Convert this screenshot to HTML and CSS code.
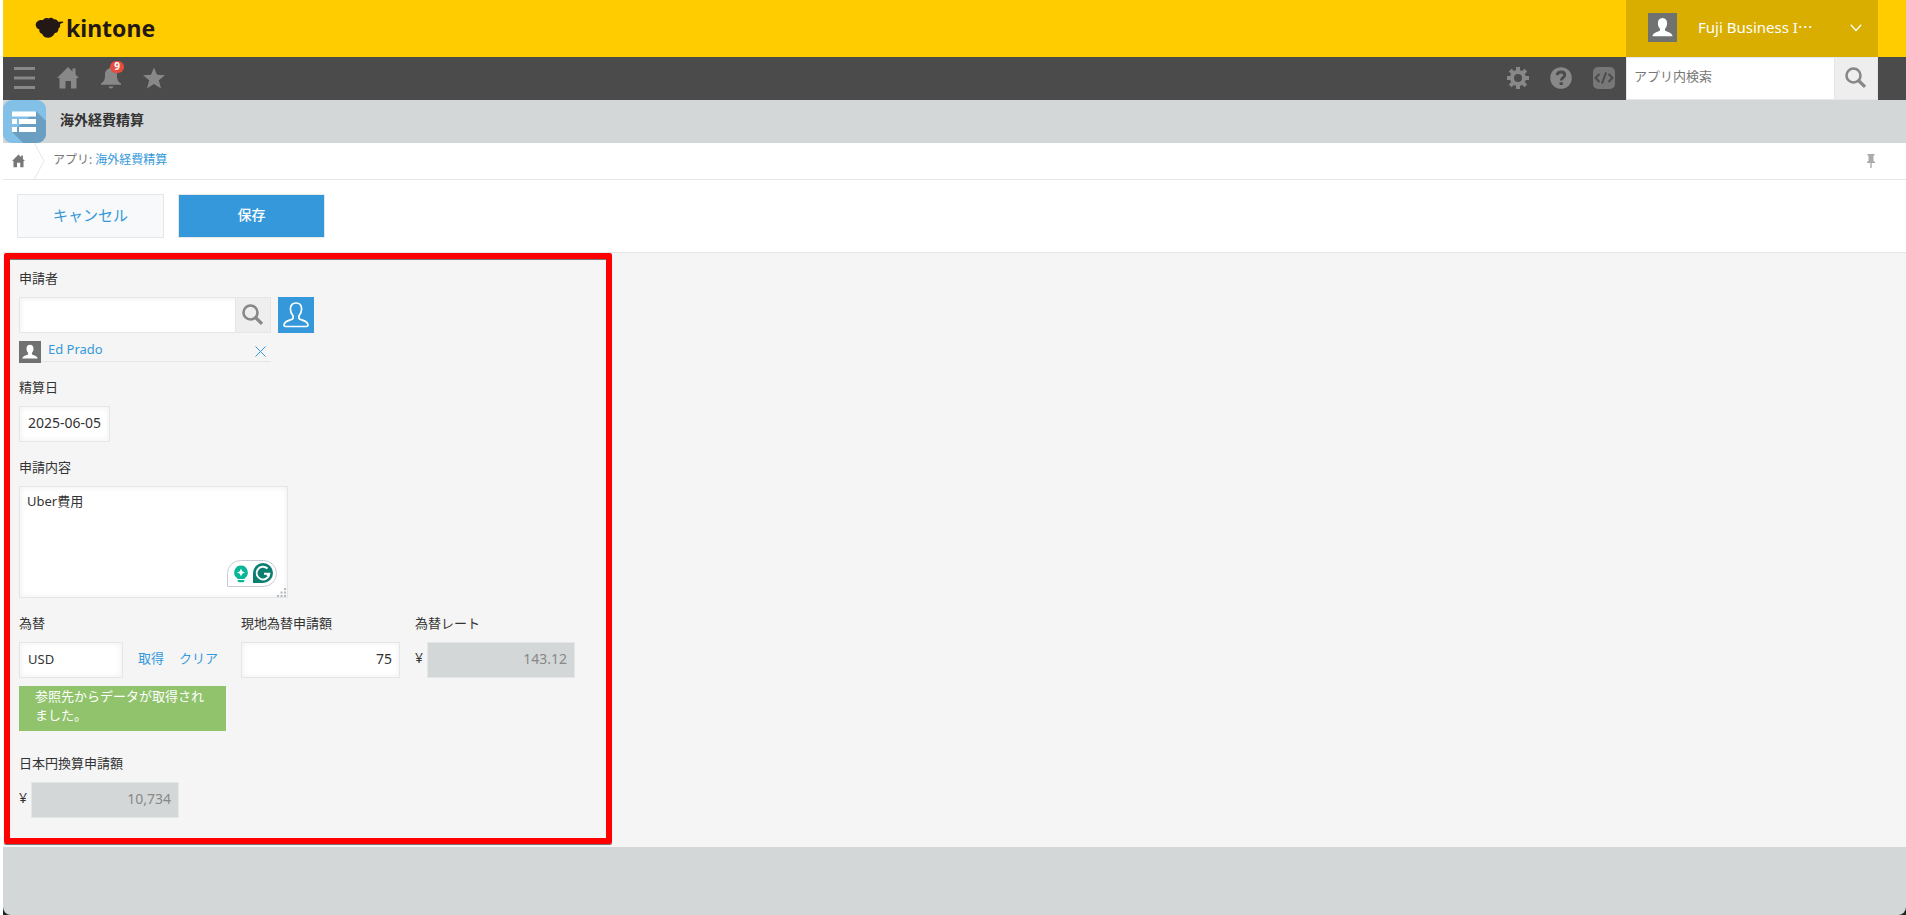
FILE: index.html
```html
<!DOCTYPE html>
<html lang="ja">
<head>
<meta charset="utf-8">
<title>海外経費精算 - kintone</title>
<link rel="stylesheet" href="styles.css">
</head>
<body>
<svg class="defs" aria-hidden="true">
  <symbol id="person" viewBox="0 0 29 29">
    <path fill="#fff" d="M14.500 5c3 0 4.600 2.100 4.600 5.200 0 2.300-.9 4.200-2.100 5.500v1.900c1.700 1.500 7.500 2.200 7.500 5.600H4.500c0-3.400 5.800-4.100 7.500-5.600v-1.900c-1.200-1.300-2.100-3.200-2.100-5.500C9.900 7.100 11.500 5 14.500 5z"/>
  </symbol>
  <symbol id="search" viewBox="0 0 22 22">
    <circle cx="8.500" cy="8.500" r="7" fill="none" stroke="#888" stroke-width="2.600"/>
    <path d="M13.500 13.500l6.500 6.300" stroke="#888" stroke-width="3.200" fill="none"/>
  </symbol>
  <symbol id="home" viewBox="0 0 22 22">
    <path d="M11 0l4.500 4.500V1.500h3v6L22 11h-2.500v10.500H14V14H8.500v7.500H2.500V11H0z"/>
  </symbol>
</svg>
<div class="page">
  <header class="brandbar">
    <a class="logo" href="#">
      <svg width="30" height="22" viewBox="0 0 30 22" fill="#231815" aria-hidden="true"><path d="M8 3.200c1-1.900 3.400-2.700 5.300-1.600 1.900-1.400 4.600-1 5.700.8 2-.3 3.600.7 4 2.400l4.600-.3c1 .1 1 .9.200 1.300L25 7.100c.6 1.800 0 3.700-1.600 4.600.3 2.300-1.300 4.200-3.600 4.400-1 2.600-3.300 4.400-6.200 4.600-3.200.2-5.800-1.300-6.300-3.700-2.300-.6-3.400-2.400-2.900-4.500C1.900 11.600.5 9.700.7 7.500 1 4.800 4.300 2.500 8 3.200z"/></svg>
      <span>kintone</span>
    </a>
    <button class="account" type="button">
      <svg class="avatar" width="29" height="29"><use href="#person"/></svg>
      <span class="account-name">Fuji Business I⋯</span>
      <svg width="12" height="8" viewBox="0 0 12 8" fill="none" stroke="#fff" stroke-width="1.300"><path d="M.8.800L6 6.500 11.200.800"/></svg>
    </button>
  </header>

  <nav class="toolbar" aria-label="メイン">
    <button type="button" aria-label="メニュー"><svg width="22" height="22" viewBox="0 0 22 22" fill="#888"><path d="M0 0h21v3H0zM0 9.500h21v3H0zM0 19h21v3H0z"/></svg></button>
    <a href="#" aria-label="ホーム"><svg width="22" height="22" fill="#888"><use href="#home"/></svg></a>
    <button class="bell" type="button" aria-label="通知"><svg width="22" height="22" viewBox="0 0 22 22" fill="#888"><path d="M11 0c1.200 0 1.800.8 1.800 1.600 3.200.9 4.200 3.400 4.200 6.600 0 4.500 1.300 6.500 4 8.300v1.200H1v-1.200c2.700-1.800 4-3.800 4-8.300 0-3.200 1-5.700 4.200-6.600C9.200.8 9.800 0 11 0zM8.500 19.500h5c-.5 1.300-1.300 2-2.500 2s-2-.7-2.500-2z"/></svg><span class="badge">9</span></button>
    <button type="button" aria-label="お気に入り"><svg width="22" height="22" viewBox="0 0 22 22" fill="#888"><path d="M11 .5l3 7.300 8 .4-6.200 5 2.200 8.300-7-4.600-7 4.600 2.200-8.300L0 8.200l8-.4z"/></svg></button>
    <span class="spacer"></span>
    <button type="button" aria-label="設定"><svg width="22" height="22" viewBox="0 0 22 22"><g stroke="#888" stroke-width="4"><path d="M11 0v22M0 11h22M3.200 3.200l15.600 15.600M18.800 3.200L3.200 18.800"/></g><circle cx="11" cy="11" r="8" fill="#888"/><circle cx="11" cy="11" r="4" fill="#4b4b4b"/></svg></button>
    <button type="button" aria-label="ヘルプ"><svg width="22" height="22" viewBox="0 0 22 22"><circle cx="11" cy="11" r="10.800" fill="#888"/><path d="M7.300 8.300C7.300 6 9 5 11 5c2.200 0 3.800 1.100 3.800 3 0 2.600-3.600 2.700-3.600 5.600" fill="none" stroke="#4b4b4b" stroke-width="2.800"/><path d="M9.600 15.200h3.200V18H9.600z" fill="#4b4b4b"/></svg></button>
    <button type="button" aria-label="開発者向け"><svg width="22" height="22" viewBox="0 0 22 22"><rect width="22" height="22" rx="5" fill="#777"/><path d="M6.500 7l-4 4 4 4M15.500 7l4 4-4 4M13 5.500L9 16.500" fill="none" stroke="#4b4b4b" stroke-width="2"/></svg></button>
    <form class="search">
      <input type="search" placeholder="アプリ内検索" aria-label="アプリ内検索">
      <button type="button" aria-label="検索"><svg width="22" height="22"><use href="#search"/></svg></button>
    </form>
  </nav>

  <div class="titlebar">
    <svg width="43" height="43" viewBox="0 0 43 43" aria-hidden="true">
      <defs><clipPath id="tile"><rect width="43" height="43" rx="9"/></clipPath></defs>
      <g clip-path="url(#tile)"><path fill="#82c0e8" d="M0 0h43v43H0z"/><path fill="#6a9fc2" d="M33 11l11 11v22H21L9 32z"/></g>
      <path fill="#fff" d="M9 11.500h24v5H9zM9 19h5v5H9zM16 19h17v5H16zM9 27h5v5H9zM16 27h17v5H16z"/>
    </svg>
    <h1>海外経費精算</h1>
  </div>

  <nav class="breadcrumb" aria-label="パンくず">
    <a class="crumb-home" href="#" aria-label="ホーム"><svg width="13" height="14" fill="#777"><use href="#home"/></svg></a>
    <svg class="crumb-sep" width="11" height="36" viewBox="0 0 11 36" fill="none" stroke="#e3e7e8"><path d="M.5 0l9.500 18L.5 36"/></svg>
    <span>アプリ: <a href="#">海外経費精算</a></span>
    <button class="pin" type="button" aria-label="固定"><svg width="8" height="14" viewBox="0 0 8 14" fill="#aaa"><path d="M.5 0h7v1.500h-1V7l1.500.8V9H4.700v5H3.300V9H0V7.800L1.500 7V1.500h-1z"/></svg></button>
  </nav>

  <div class="actions">
    <button class="btn" type="button">キャンセル</button>
    <button class="btn primary" type="button">保存</button>
  </div>

  <main>
    <form class="record">
      <div class="field">
        <label for="applicant">申請者</label>
        <div class="picker">
          <div class="picker-box">
            <input id="applicant" type="text">
            <button type="button" aria-label="検索"><svg width="22" height="22"><use href="#search"/></svg></button>
          </div>
          <button class="org" type="button" aria-label="ユーザーを選択"><svg width="26" height="26" viewBox="0 0 26 26" fill="none" stroke="#fff" stroke-width="1.700"><path d="M13 1c3.600 0 5.600 2.500 5.600 6 0 2.800-1 5-2.500 6.600-.7 1.700-.3 3.200 1.300 3.900 3 1.200 7.600 1.800 7.600 5.500 0 1-.5 1.500-1.500 1.500h-21C1.500 24.500 1 24 1 23c0-3.700 4.600-4.300 7.600-5.500 1.600-.7 2-2.200 1.300-3.900C8.400 12 7.400 9.800 7.400 7c0-3.500 2-6 5.600-6z"/></svg></button>
        </div>
        <div class="chosen">
          <svg class="avatar" width="22" height="22"><use href="#person"/></svg>
          <div class="chosen-line">
            <a href="#">Ed Prado</a>
            <button type="button" aria-label="削除"><svg width="11" height="11" viewBox="0 0 11 11" stroke="#3498db"><path d="M.5.500l10 10M10.500.500l-10 10"/></svg></button>
          </div>
        </div>
      </div>

      <div class="field">
        <label for="date">精算日</label>
        <input class="box num date" id="date" type="text" value="2025-06-05">
      </div>

      <div class="field">
        <label for="detail">申請内容</label>
        <div class="note">
          <textarea class="box" id="detail">Uber費用</textarea>
          <svg class="assist" width="50" height="27" viewBox="0 0 50 27" aria-hidden="true">
            <path d="M.5 26.500v-13a13 13 0 0 1 13-13h23a13 13 0 0 1 0 26z" fill="#fff" stroke="#c8cad8"/>
            <path d="M14 5.500a7 7 0 0 1 3.700 12.800V19h-7.400v-.7A7 7 0 0 1 14 5.500zM10.500 20h7c0 1.500-1 2.300-2 2.300h-3c-1 0-2-.8-2-2.300z" fill="#08b596"/>
            <path d="M14 8.500l1.200 2.800 2.800 1.200-2.800 1.200L14 16.500l-1.200-2.800-2.800-1.200 2.800-1.200z" fill="#fff"/>
            <path d="M26 23V13a10 10 0 1 1 10 10z" fill="#0a7f6f"/>
            <path d="M40.500 8.500a6.400 6.400 0 1 0 1.900 5.200H37M42.400 13.200l-2.200 2.600" fill="none" stroke="#fff" stroke-width="2"/>
          </svg>
          <svg class="grip" width="9" height="9" viewBox="0 0 9 9" fill="#b3b9c0" aria-hidden="true"><path d="M7 0h2v2H7zM3.500 3.500h2v2h-2zM7 3.500h2v2H7zM0 7h2v2H0zM3.500 7h2v2h-2zM7 7h2v2H7z"/></svg>
        </div>
      </div>

      <div class="row">
        <div class="field lookup">
          <label for="currency">為替</label>
          <div class="lookup-line">
            <input class="box" id="currency" type="text" value="USD">
            <a href="#">取得</a>
            <a href="#">クリア</a>
          </div>
          <p class="message" role="status">参照先からデータが取得されました。</p>
        </div>
        <div class="field">
          <label for="amount">現地為替申請額</label>
          <input class="box num amount" id="amount" type="text" value="75">
        </div>
        <div class="field">
          <label for="rate">為替レート</label>
          <div class="money"><span>¥</span><input class="box num" id="rate" type="text" value="143.12" disabled></div>
        </div>
      </div>

      <div class="field">
        <label for="total">日本円換算申請額</label>
        <div class="money"><span>¥</span><input class="box num" id="total" type="text" value="10,734" disabled></div>
      </div>
    </form>
  </main>
  <footer></footer>
</div>
</body>
</html>
```

FILE: styles.css
```css
* { box-sizing: border-box; }

body {
  margin: 0;
  padding-left: 3px;
  background: #fff;
  color: #333;
  font: 13px/20px "Noto Sans", "Noto Sans CJK JP", sans-serif;
}

svg { display: block; flex: none; }
.defs { position: absolute; width: 0; height: 0; }
a { color: #3498db; text-decoration: none; }

button {
  display: flex;
  align-items: center;
  justify-content: center;
  padding: 0;
  border: 0;
  background: none;
  color: inherit;
  font: inherit;
  cursor: pointer;
}

input, textarea { font: inherit; color: inherit; margin: 0; }

.page {
  display: flex;
  flex-direction: column;
  min-height: 100vh;
  background: #1c2a22;
}

.brandbar {
  display: flex;
  justify-content: space-between;
  height: 57px;
  padding-right: 28px;
  background: #ffcc00;
}

.logo {
  display: flex;
  align-items: center;
  gap: 1px;
  padding: 0 0 2px 32px;
  color: #231815;
  font-size: 23px;
  font-weight: 700;
}

.account {
  width: 252px;
  gap: 21px;
  padding: 0 16px 2px 22px;
  background: #d9ae00;
  color: #fff;
}

.avatar { background: #707272; }

.account-name {
  flex: 1;
  padding-bottom: 2px;
  font-size: 15px;
  text-align: left;
  white-space: nowrap;
}

.toolbar {
  display: flex;
  align-items: center;
  gap: 21px;
  height: 43px;
  padding: 0 28px 0 11px;
  background: #4b4b4b;
}

.toolbar > a, .toolbar > button { padding-bottom: 2px; }
.spacer { flex: 1; }
.bell { position: relative; }

.badge {
  position: absolute;
  top: -6px;
  left: 10px;
  width: 14px;
  height: 12px;
  border-radius: 6px;
  background: #e74c3c;
  color: #fff;
  font-size: 10px;
  font-weight: 700;
  line-height: 11px;
}

.search {
  display: flex;
  width: 252px;
  height: 43px;
  margin-left: -10px;
  border: 1px solid #e3e7e8;
  background: #fff;
}

.search input {
  flex: 1;
  min-width: 0;
  padding: 0 7px 5px;
  border: 0;
  background: none;
}

.search input::placeholder { color: #777; }

.search button, .picker-box button {
  width: 43px;
  border-left: 1px solid #e3e7e8;
  background: #eee;
}

.search button { padding-bottom: 2px; }

.titlebar {
  display: flex;
  align-items: center;
  gap: 14px;
  height: 43px;
  background: #d4d7d7;
}

h1 { margin: 0; padding-bottom: 3px; font-size: 14px; line-height: 20px; }

.breadcrumb {
  display: flex;
  align-items: center;
  height: 37px;
  padding: 0 31px 0 9px;
  border-bottom: 1px solid #e3e7e8;
  background: #fff;
  color: #777;
  font-size: 12px;
}

.breadcrumb > span { padding-bottom: 2px; }
.crumb-sep { margin: 0 8px 0 9px; }
.pin { margin-left: auto; }

.actions {
  display: flex;
  gap: 14px;
  padding: 14px;
  height: 73px;
  border-bottom: 1px solid #e3e7e8;
  background: #fff;
}

.btn {
  width: 147px;
  height: 44px;
  padding-bottom: 2px;
  border: 1px solid #e3e7e8;
  background: #f7f9fa;
  color: #3498db;
  font-size: 15px;
}

.btn.primary { background: #3498db; color: #fff; font-size: 14px; font-weight: 500; }

main {
  padding: 0 1px 3px;
  background: #f5f5f5;
}

.record {
  display: flex;
  flex-direction: column;
  align-items: flex-start;
  gap: 16px;
  width: 608px;
  padding: 10px 9px 20px;
  border: 6px solid #f00;
  border-radius: 2px;
  box-shadow: 0 1px #777, inset 0 1px #777;
}

.field {
  display: flex;
  flex-direction: column;
  align-items: flex-start;
  gap: 8px;
}

.field label { line-height: 18px; padding-bottom: 2px; }
.picker { display: flex; gap: 7px; }

.picker-box {
  display: flex;
  width: 252px;
  height: 36px;
  border: 1px solid #e3e7e8;
}

.picker-box input {
  flex: 1;
  min-width: 0;
  border: 0;
  background: #fff;
  box-shadow: inset 2px 2px 4px #f5f5f5;
}

.picker-box button { width: 35px; }
.org { width: 36px; height: 36px; background: #3498db; }
.chosen { display: flex; width: 252px; height: 21px; }

.chosen-line {
  display: flex;
  flex: 1;
  justify-content: space-between;
  padding: 0 5px 0 7px;
  border-bottom: 1px solid #e3e7e8;
  line-height: 16px;
}

.box {
  display: block;
  height: 36px;
  padding: 0 8px 2px;
  border: 1px solid #e3e7e8;
  border-radius: 0;
  background: #fff;
  box-shadow: inset 2px 2px 4px #f5f5f5, inset -2px -2px 4px #f5f5f5;
}

.box:disabled { background: #d4d7d7; box-shadow: none; color: #888; }
.num { padding: 0 7px 3px; font-size: 14px; text-align: right; }
.date { width: 91px; text-align: center; }
.note { position: relative; }

textarea.box {
  width: 269px;
  height: 112px;
  padding: 4px 7px;
  resize: none;
}

.assist { position: absolute; right: 11px; bottom: 11px; }
.grip { position: absolute; right: 2px; bottom: 1px; }
.row { display: flex; align-items: flex-start; gap: 15px; margin-bottom: 7px; }
.lookup { width: 207px; }
.lookup-line { display: flex; gap: 15px; width: 100%; }
.lookup-line input { width: 104px; }
.lookup-line a { line-height: 32px; white-space: nowrap; }

.message {
  width: 207px;
  margin: 0;
  padding: 1px 16px 6px;
  background: #91c36c;
  color: #fff;
  line-height: 19px;
}

.amount { width: 159px; }
.money { display: flex; gap: 4px; line-height: 32px; }
.money span { font-size: 14px; }
.money .box { width: 148px; }

footer {
  flex: 1;
  min-height: 68px;
  border-radius: 0 0 8px 8px;
  background: #d4d7d7;
}
```
